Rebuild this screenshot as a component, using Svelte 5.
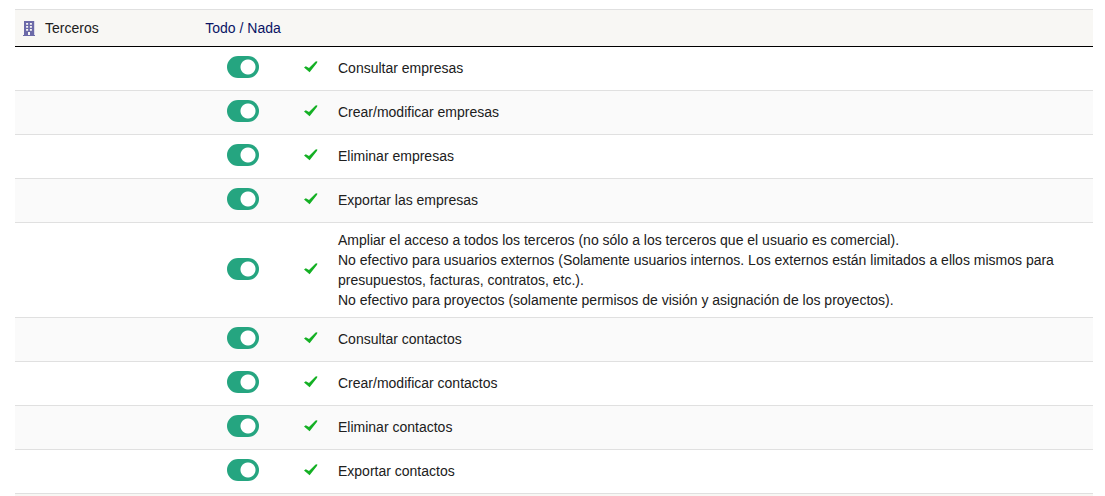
<script>
	let permissions = $state([
		{ id: "read", label: ["Consultar empresas"], enabled: true },
		{ id: "write", label: ["Crear/modificar empresas"], enabled: true },
		{ id: "delete", label: ["Eliminar empresas"], enabled: true },
		{ id: "export", label: ["Exportar las empresas"], enabled: true },
		{
			id: "extend",
			label: [
				"Ampliar el acceso a todos los terceros (no sólo a los terceros que el usuario es comercial).",
				"No efectivo para usuarios externos (Solamente usuarios internos. Los externos están limitados a ellos mismos para presupuestos, facturas, contratos, etc.).",
				"No efectivo para proyectos (solamente permisos de visión y asignación de los proyectos).",
			],
			enabled: true,
		},
		{ id: "contact-read", label: ["Consultar contactos"], enabled: true },
		{ id: "contact-write", label: ["Crear/modificar contactos"], enabled: true },
		{ id: "contact-delete", label: ["Eliminar contactos"], enabled: true },
		{ id: "contact-export", label: ["Exportar contactos"], enabled: true },
	]);

	function setAll(value) {
		permissions.forEach((permission) => (permission.enabled = value));
	}
</script>

<main>
	<table>
		<thead>
			<tr>
				<th class="module" scope="col">
					<span>
						<svg class="building" viewBox="0 0 12 15" aria-hidden="true">
							<path
								fill-rule="evenodd"
								d="M1 0h10.2v14h.8v1H0v-1h1zM3.1 2v1.7h2V2zm3.8 0v1.7h2V2zM3.1 5v1.7h2V5zm3.8 0v1.7h2V5zM3.1 8v1.7h2V8zm3.8 0v1.7h2V8zM5 11v3h2v-3z"
							/>
						</svg>
						Terceros
					</span>
				</th>
				<th class="switch" scope="col">
					<a href="#all" onclick={() => setAll(true)}>Todo</a>
					/
					<a href="#none" onclick={() => setAll(false)}>Nada</a>
				</th>
				<th class="state"></th>
				<th></th>
			</tr>
		</thead>
		<tbody>
			{#each permissions as permission (permission.id)}
				<tr>
					<td></td>
					<td class="switch">
						<input type="checkbox" id={permission.id} bind:checked={permission.enabled} />
					</td>
					<td class="state">
						{#if permission.enabled}
							<svg class="tick" viewBox="0 0 14 12" aria-hidden="true">
								<path d="M0 6.6L1.8 5.2L5 7L11.6 0.6L13.3 0.2L13.1 1.8L5.6 11.2Z" />
							</svg>
						{/if}
					</td>
					<td>
						<label for={permission.id}>
							{#each permission.label as line}
								<span>{line}</span>
							{/each}
						</label>
					</td>
				</tr>
			{/each}
		</tbody>
		<tfoot>
			<tr><td colspan="4"></td></tr>
		</tfoot>
	</table>
</main>

<style>
	:global(body) {
		margin: 0;
		background: #fff;
	}
	main {
		padding: 9px 12px 0 15px;
		font-family: "Liberation Sans", Arial, sans-serif;
		font-size: 14px;
		line-height: 20px;
		color: #202020;
	}
	table {
		width: 100%;
		table-layout: fixed;
		border-collapse: separate;
		border-spacing: 0;
		border-top: 1px solid #e0e0e0;
	}
	th {
		height: 36px;
		padding: 0;
		font-weight: normal;
		text-align: left;
		background: #f8f7f4;
		border-bottom: 1px solid #000;
	}
	.module {
		width: 182px;
	}
	.module span {
		display: flex;
		align-items: center;
		gap: 10px;
		padding-left: 8px;
	}
	.switch {
		width: 92px;
		text-align: center;
		color: #0a1464;
	}
	.state {
		width: 44px;
		text-align: center;
	}
	a {
		color: inherit;
		text-decoration: none;
	}
	tbody td {
		height: 29px;
		padding: 7px 0;
		border-bottom: 1px solid #e0e0e0;
	}
	tbody td:last-child {
		padding-left: 5px;
		padding-right: 5px;
	}
	tbody tr:nth-child(even) {
		background: #fafafa;
	}
	tfoot td {
		height: 2px;
		padding: 0;
		background: #f8f7f4;
	}
	label {
		display: block;
		min-height: 21px;
	}
	label span {
		display: block;
	}
	.building {
		width: 12px;
		height: 15px;
		fill: #6c6aa8;
	}
	.tick {
		display: block;
		width: 14px;
		height: 12px;
		margin: 0 auto 3px;
		fill: #14b024;
	}
	input {
		display: block;
		box-sizing: border-box;
		width: 32px;
		height: 22px;
		margin: 0 auto 3px;
		border-radius: 11px;
		appearance: none;
		background: radial-gradient(circle at 11px 11px, #fff 7px, #999 8px);
		cursor: pointer;
	}
	input:checked {
		background: radial-gradient(circle at 21px 11px, #fff 7px, #25a580 8px);
	}
</style>
